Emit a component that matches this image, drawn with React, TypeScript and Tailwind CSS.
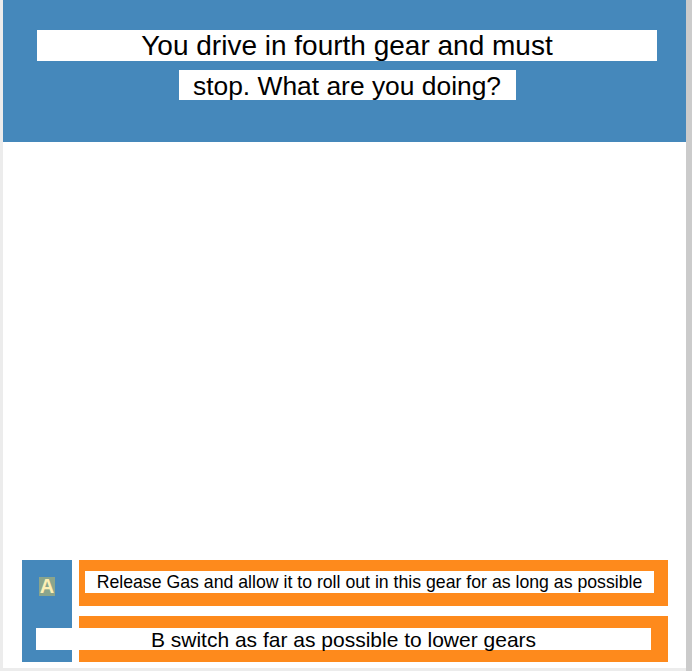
import React from "react";

const App: React.FC = () => {
  return (
    <div
      className="w-[692px] h-[671px] flex bg-white overflow-hidden"
      style={{ fontFamily: '"Liberation Sans", Arial, sans-serif' }}
    >
      {/* left edge */}
      <div className="w-[3px] h-full bg-[#ececec]" />

      {/* page */}
      <div className="w-[683px] h-full flex flex-col">
        {/* Question header */}
        <div className="h-[142px] bg-[#4588bb] flex flex-col items-center pt-[30px] pl-[5px] gap-[9px] text-black">
          <span className="bg-white w-[620px] h-[31px] text-[28px] leading-[31px] text-center">
            You drive in fourth gear and must
          </span>
          <span className="bg-white w-[337px] h-[30px] text-[26.4px] leading-[32px] text-center">
            stop. What are you doing?
          </span>
        </div>

        {/* image area */}
        <div className="h-[418px]" />

        {/* answers */}
        <div className="flex pl-[19px] gap-[7px]">
          <div className="w-[50px] h-[102px] bg-[#4588bb] flex justify-center pt-[17px]">
            <span className="h-[19px] px-[1px] bg-[#8aa58c] text-[#fcefb4] text-[20px] leading-[19px] font-bold">A</span>
          </div>
          <div className="w-[589px] flex flex-col gap-[10px]">
            <div className="h-[46px] bg-[#fe8a1c] pt-[11px] pl-[6px]">
              <div className="w-[569px] h-[22px] bg-white text-black text-[17.7px] leading-[23px] text-center whitespace-nowrap">
                Release Gas and allow it to roll out in this gear for as long as possible
              </div>
            </div>
            <div className="h-[46px] bg-[#fe8a1c] pt-[12px]">
              <div className="relative -ml-[43px] w-[615px] h-[22px] bg-white text-black text-[21px] leading-[24px] text-center">
                B switch as far as possible to lower gears
              </div>
            </div>
          </div>
        </div>

        <div className="flex-1" />
        <div className="h-[3px] bg-[#ececec]" />
      </div>

      {/* right scrollbar edge */}
      <div className="w-[6px] h-full bg-[#cbcbcb]" />
    </div>
  );
};

export default App;
